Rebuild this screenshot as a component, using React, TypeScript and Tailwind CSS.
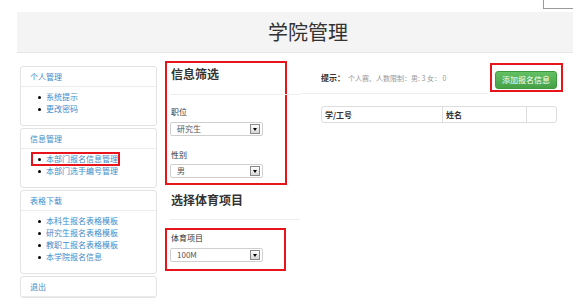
import React from "react";

type PanelProps = {
  title: string;
  items: string[];
  marked?: number;
};

function Panel({ title, items, marked }: PanelProps) {
  return (
    <div className="border border-[#e3e3e3] rounded-[3px] bg-white">
      <div className="h-[20px] flex items-center pl-[9px] border-b border-[#ececec] text-[8px] text-[#428bca]">
        {title}
      </div>
      {items.length > 0 && (
        <ul className="pt-[4px] pb-[10px] pl-[17px]">
          {items.map((item, i) => (
            <li key={item} className="relative h-[12px] flex items-center text-[8px] text-[#428bca]">
              <span className="w-[3px] h-[3px] rounded-full bg-black mr-[5px]" />
              <span>{item}</span>
              {marked === i && (
                <span className="absolute left-[-7px] top-[-1px] w-[89px] h-[14px] border-2 border-[#e8141c]" />
              )}
            </li>
          ))}
        </ul>
      )}
    </div>
  );
}

function Select({ value }: { value: string }) {
  return (
    <div className="ml-[3px] h-[14px] w-[93px] border border-[#cfcfcf] rounded-[2px] bg-white flex items-center justify-between pl-[6px] pr-[2px] text-[8px] text-[#555]">
      <span>{value}</span>
      <span className="w-[10px] h-[10px] border border-[#8a8a8a] bg-linear-to-b from-white to-[#d6d6d6] flex items-center justify-center">
        <span className="w-0 h-0 border-x-[2.5px] border-x-transparent border-t-[3px] border-t-black" />
      </span>
    </div>
  );
}

export default function App() {
  return (
    <div className="w-[573px] h-[308px] overflow-hidden bg-white text-[#333] font-['Noto_Sans_CJK_SC',sans-serif]">
      <div className="h-[12px] flex justify-end">
        <div className="w-[30px] h-[9px] border-l border-b border-[#9a9a9a]" />
      </div>
      <div className="ml-[17px] h-[41px] bg-[#f4f4f4] border-b border-[#e6e6e6] flex items-center justify-center pl-[26px] text-[20px] text-[#333]">
        学院管理
      </div>

      <div className="flex items-start">
        {/* sidebar */}
        <div className="ml-[20px] mt-[13px] w-[137px] flex flex-col gap-[2px]">
          <Panel title="个人管理" items={["系统提示", "更改密码"]} />
          <Panel title="信息管理" items={["本部门报名信息管理", "本部门选手编号管理"]} marked={0} />
          <Panel title="表格下载" items={["本科生报名表格模板", "研究生报名表格模板", "教职工报名表格模板", "本学院报名信息"]} />
          <Panel title="退出" items={[]} />
        </div>

        {/* filters */}
        <div className="ml-[8px] mt-[8px] w-[135px]">
          <div className="w-[122px] border-2 border-[#e8141c] pb-[5px]">
            <div className="pt-[4px] pl-[4px] h-[18px] leading-[14px] text-[12px] font-bold">信息筛选</div>
            <div className="mt-[13px] ml-[3px] mr-[-15px] h-px bg-[#eeeeee]" />
            <div className="mt-[12px] pl-[4px] h-[10px] leading-[10px] text-[8px]">职位</div>
            <div className="mt-[5px]">
              <Select value="研究生" />
            </div>
            <div className="mt-[14px] pl-[4px] h-[10px] leading-[10px] text-[8px]">性别</div>
            <div className="mt-[4px]">
              <Select value="男" />
            </div>
          </div>
          <div className="mt-[8px] pl-[6px] h-[14px] leading-[14px] text-[12px] font-bold">选择体育项目</div>
          <div className="mt-[12px] ml-[5px] h-px bg-[#eeeeee]" />
          <div className="mt-[8px] w-[121px] border-2 border-[#e8141c] pt-[3px] pb-[7px]">
            <div className="pl-[4px] h-[10px] leading-[10px] text-[8px]">体育项目</div>
            <div className="mt-[5px]">
              <Select value="100M" />
            </div>
          </div>
        </div>

        {/* list */}
        <div className="mt-[10px] w-[263px]">
          <div className="flex items-center justify-between">
            <div className="pl-[21px] flex items-baseline gap-[3px]">
              <span className="text-[8px] font-bold">提示：</span>
              <span className="text-[7px] text-[#999]">个人赛、人数限制：男: 3 女： 0</span>
            </div>
            <div className="w-[73px] h-[29px] border-2 border-[#e8141c] pt-[6px] pl-[3px]">
              <button className="w-[62px] h-[18px] rounded-[3px] border border-[#3e9a3e] bg-linear-to-b from-[#62c162] to-[#46a046] text-white text-[8px] flex items-center justify-center">
                添加报名信息
              </button>
            </div>
          </div>
          <div className="mt-[1px] w-[188px] h-px bg-[#eeeeee]" />
          <div className="mt-[12px] ml-[21px] w-[236px] h-[17px] border border-[#dddddd] rounded-[3px] flex text-[8px] font-bold">
            <div className="w-[121px] pl-[3px] flex items-center border-r border-[#dddddd]">学/工号</div>
            <div className="w-[84px] pl-[3px] flex items-center border-r border-[#dddddd]">姓名</div>
            <div className="flex-1" />
          </div>
        </div>
      </div>
    </div>
  );
}
